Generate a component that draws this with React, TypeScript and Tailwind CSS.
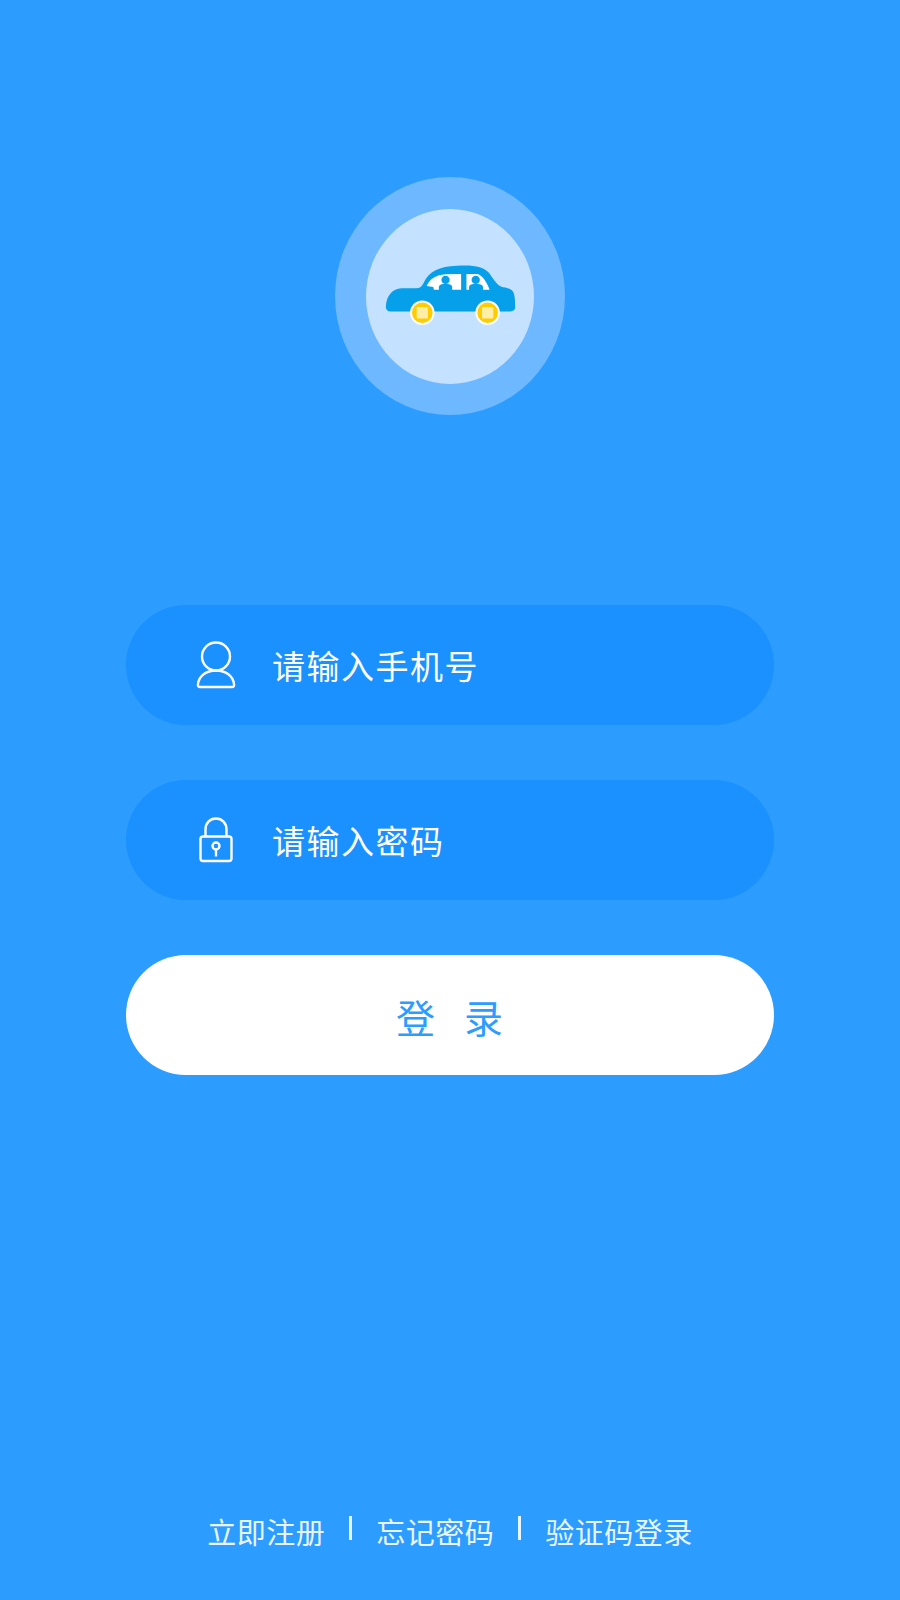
import React from 'react'

const cjk = "font-['Noto_Sans_CJK_SC','Noto_Sans',sans-serif]"

function CarLogo() {
  return (
    <svg width="133" height="63" viewBox="40 40 400 190" className="block">
      <path
        d="M60 183 C50 183 45 178 45 168 C47 135 65 114 92 113 L138 113 C150 113 155 105 160 95 C175 62 205 47 260 45 C310 42 340 48 355 66 C368 82 378 102 392 108 C402 112 415 111 425 119 C433 127 435 140 435 170 C435 180 428 183 420 183 Z"
        fill="#069fe9"
      />
      {/* windows */}
      <path d="M168 106 C178 85 195 73 225 71 L272 70 L272 118 L190 118 L188 109 Z" fill="#fff" />
      <path d="M288 70 L320 70 C335 72 350 95 358 118 L288 118 Z" fill="#fff" />
      {/* passengers */}
      <circle cx="225" cy="88" r="12.500" fill="#069fe9" />
      <path d="M205 120 L205 110 C205 101 215 100 225 100 C235 100 245 101 245 110 L245 120 Z" fill="#069fe9" />
      <circle cx="316" cy="88" r="12.500" fill="#069fe9" />
      <path d="M296 120 L296 110 C296 101 306 100 316 100 C326 100 338 101 338 110 L338 120 Z" fill="#069fe9" />
      {/* wheels */}
      <circle cx="155" cy="187" r="37" fill="#fff" />
      <circle cx="155" cy="187" r="31" fill="#ffcc00" />
      <rect x="138" y="170" width="34" height="34" rx="3" fill="#ffeea8" />
      <circle cx="352" cy="187" r="37" fill="#fff" />
      <circle cx="352" cy="187" r="31" fill="#ffcc00" />
      <rect x="335" y="170" width="34" height="34" rx="3" fill="#ffeea8" />
    </svg>
  )
}

function UserIcon() {
  return (
    <svg width="40" height="48" viewBox="0 0 40 48" fill="none" stroke="#fff" strokeWidth="2.400" className="block">
      <circle cx="20" cy="15.500" r="14" />
      <path d="M2 43 C3 35 10 29.500 20 29.500 C30 29.500 37 35 38 43 C38.500 45 37.500 46 36 46 L4 46 C2.500 46 1.500 45 2 43 Z" strokeLinejoin="round" />
    </svg>
  )
}

function LockIcon() {
  return (
    <svg width="34" height="46" viewBox="0 0 34 46" fill="none" stroke="#fff" strokeWidth="2.400" className="block">
      <rect x="1.500" y="19.500" width="31" height="24.500" rx="2.500" />
      <path d="M6.500 19 L6.500 12.500 C6.500 6 11 1.500 17 1.500 C23 1.500 27.500 6 27.500 12.500 L27.500 19" />
      <circle cx="17" cy="29" r="3.500" />
      <path d="M17 32.500 L17 39.500" />
    </svg>
  )
}

function InputRow({ icon, label }: { icon: React.ReactNode; label: string }) {
  return (
    <div className="flex h-[120px] w-[648px] items-center rounded-[60px] bg-[#1a91ff] pl-[70px]">
      <div className="flex w-[76px] justify-start">
        <div className="flex w-[40px] justify-center">{icon}</div>
      </div>
      <span className={`${cjk} text-[33px] leading-none tracking-[1.500px] text-white`}>{label}</span>
    </div>
  )
}

function FooterLink({ children }: { children: React.ReactNode }) {
  return <span className={`${cjk} text-[29px] leading-none tracking-[0.500px] text-[#e8f4ff]`}>{children}</span>
}

export default function App() {
  return (
    <div className="flex h-[1600px] w-[900px] flex-col items-center overflow-hidden bg-[#2d9cff] pt-[177px]">
      {/* logo */}
      <div className="flex h-[238px] w-[230px] items-center justify-center rounded-[50%] bg-[#6db8ff]">
        <div className="flex h-[175px] w-[168px] items-center justify-center rounded-[50%] bg-[#c4e2ff] pb-[2px]">
          <CarLogo />
        </div>
      </div>

      <div className="mt-[190px] flex flex-col gap-[55px]">
        <InputRow icon={<UserIcon />} label="请输入手机号" />
        <InputRow icon={<LockIcon />} label="请输入密码" />
        <div className="flex h-[120px] w-[648px] items-center justify-center rounded-[60px] bg-white">
          <span className={`${cjk} pl-[28px] pt-[2px] text-[39px] leading-none tracking-[29px] text-[#2d9cff]`}>登录</span>
        </div>
      </div>

      <div className="mt-[441px] flex items-center gap-[24px]">
        <FooterLink>立即注册</FooterLink>
        <div className="mb-[6px] h-[24px] w-[3px] bg-[#e8f4ff]" />
        <FooterLink>忘记密码</FooterLink>
        <div className="mb-[6px] h-[24px] w-[3px] bg-[#e8f4ff]" />
        <FooterLink>验证码登录</FooterLink>
      </div>
    </div>
  )
}
